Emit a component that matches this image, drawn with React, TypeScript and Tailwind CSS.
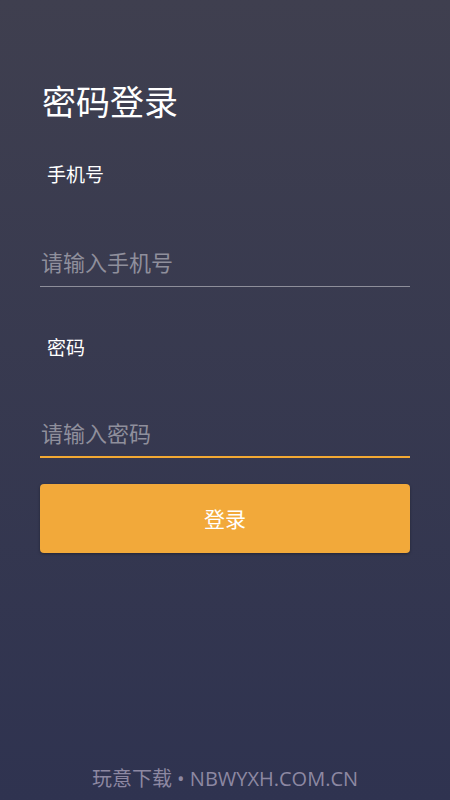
import React from "react";

export default function App() {
  const font = { fontFamily: '"Noto Sans CJK SC", "Noto Sans", sans-serif' };
  return (
    <div
      style={font}
      className="w-[450px] h-[800px] flex flex-col bg-gradient-to-b from-[#3f3f4f] to-[#2f3350] overflow-hidden"
    >
      <div className="flex flex-col px-[40px] pt-[78px]">
        <h1 className="text-[34px] leading-[46px] text-white pl-[2px] font-normal">密码登录</h1>
        <div className="mt-[38px] pl-[7px] text-[19px] leading-[24px] text-white">手机号</div>
        <div className="mt-[61px] pb-[11px] border-b border-[#8e8e9a] text-[22px] leading-[28px] text-[#8f8f9c] pl-[1px]">
          请输入手机号
        </div>
        <div className="mt-[48px] pl-[7px] text-[19px] leading-[24px] text-white">密码</div>
        <div className="mt-[59px] pb-[10px] border-b-2 border-[#f2a933] text-[22px] leading-[28px] text-[#8f8f9c] pl-[1px]">
          请输入密码
        </div>
        <button className="mt-[26px] h-[69px] w-full rounded-[4px] bg-[#f2a93a] text-white text-[21px] shadow-[0_1px_3px_rgba(0,0,0,0.35)]">
          登录
        </button>
      </div>
      <div className="flex-1" />
      <div
        style={{ fontFamily: '"Open Sans", "Noto Sans CJK SC", sans-serif' }}
        className="pb-[8px] text-center text-[20px] leading-[26px] text-[#8d88a2]"
      >
        玩意下载 • NBWYXH.COM.CN
      </div>
    </div>
  );
}
